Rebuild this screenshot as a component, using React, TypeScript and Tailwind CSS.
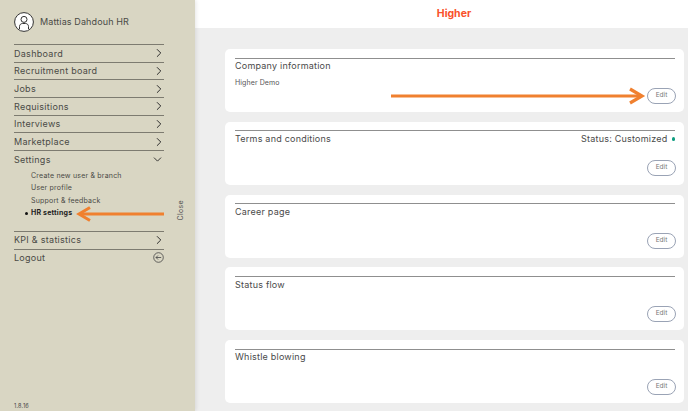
import { ChevronRight, ChevronDown } from "lucide-react";

const font = { fontFamily: '"Inter", "Liberation Sans", sans-serif' };

function Row({ label, open }: { label: string; open?: boolean }) {
  return (
    <div className="flex h-[17.7px] items-center justify-between border-t border-[#7d7b70] text-[9px] tracking-[0.28px] text-[#4a4a46]">
      <span>{label}</span>
      {open ? (
        <ChevronDown className="h-[13px] w-[13px] text-[#222]" strokeWidth={1.6} />
      ) : (
        <ChevronRight className="h-[14px] w-[14px] -mr-[2px] text-[#222]" strokeWidth={1.6} />
      )}
    </div>
  );
}

function Card({ title, status, sub, arrow }: { title: string; status?: boolean; sub?: string; arrow?: boolean }) {
  return (
    <div className="relative flex h-[63px] flex-col rounded-[5px] bg-white pl-[10px] pr-[9px] pt-[8.5px]">
      <div className="flex h-[16px] items-center justify-between border-t border-[#8f8f8f] text-[9px] tracking-[0.22px] text-[#4a4a4a]">
        <span>{title}</span>
        {status && (
          <span className="flex items-center gap-[3px]">
            Status: Customized
            <span className="ml-[1px] h-[3.5px] w-[3.5px] rounded-full bg-[#0f9d80]" />
          </span>
        )}
      </div>
      {sub && <div className="mt-[4px] text-[7px] tracking-[0.1px] text-[#555]">{sub}</div>}
      <button className="absolute bottom-[8.5px] right-[8px] flex h-[16px] w-[29px] items-center justify-center rounded-full border border-[#9aa3b5] text-[6.5px] text-[#777]">
        Edit
      </button>
      {arrow && (
        <svg className="absolute left-[165px] top-[37px]" width="256" height="20" viewBox="0 0 256 20" fill="none">
          <path d="M1 10H250" stroke="#f0802f" strokeWidth="3" />
          <path d="M240 3L252 10L240 17" stroke="#f0802f" strokeWidth="3.2" />
        </svg>
      )}
    </div>
  );
}

export default function App() {
  return (
    <div className="flex h-[411px] w-[688px] overflow-hidden bg-[#eeeeee]" style={font}>
      <aside className="relative flex w-[195px] shrink-0 flex-col bg-[#d9d6c3] px-[14px] shadow-[1px_0_4px_rgba(0,0,0,0.1)]">
        <div className="flex h-[44px] items-center gap-[6px]">
          <svg width="20" height="20" viewBox="0 0 20 20" fill="none" stroke="#333" strokeWidth="1" className="shrink-0">
            <circle cx="10" cy="10" r="9.4" fill="#fff" />
            <circle cx="10" cy="7.4" r="3" />
            <path d="M5.5 17V14.5C5.5 12.6 7 11.5 8.5 11.5H11.5C13 11.5 14.5 12.6 14.5 14.5V17" />
          </svg>
          <span className="text-[9px] tracking-[0.12px] text-[#4a4a46]">Mattias Dahdouh HR</span>
        </div>
        <div className="w-[150px]">
          <Row label="Dashboard" />
          <Row label="Recruitment board" />
          <Row label="Jobs" />
          <Row label="Requisitions" />
          <Row label="Interviews" />
          <Row label="Marketplace" />
          <Row label="Settings" open />
          <div className="flex h-[63px] flex-col pl-[17px] pt-[2px] text-[7px] tracking-[0.2px] text-[#4a4a46]">
            <div className="flex h-[12.4px] items-center">Create new user &amp; branch</div>
            <div className="flex h-[12.4px] items-center">User profile</div>
            <div className="flex h-[12.4px] items-center">Support &amp; feedback</div>
            <div className="relative flex h-[12.4px] items-center font-bold text-[#222]">
              <span className="absolute -left-[6px] h-[3px] w-[3px] rounded-full bg-[#111]" />
              HR settings
            </div>
          </div>
          <Row label="KPI & statistics" />
          <div className="flex h-[17.7px] items-center justify-between border-t border-[#7d7b70] text-[9px] tracking-[0.28px] text-[#4a4a46]">
            <span>Logout</span>
            <svg width="11" height="11" viewBox="0 0 11 11" fill="none" stroke="#444" strokeWidth="0.8">
              <circle cx="5.5" cy="5.5" r="4.8" />
              <path d="M8.2 5.5H3M5 3.5L3 5.5L5 7.5" />
            </svg>
          </div>
        </div>
        <svg className="absolute left-[76px] top-[206px]" width="90" height="16" viewBox="0 0 90 16" fill="none">
          <path d="M88 8H5" stroke="#f0802f" strokeWidth="3" />
          <path d="M14 1.5L3 8L14 14.5" stroke="#f0802f" strokeWidth="3" />
        </svg>
        <span className="absolute left-[171px] top-[205px] origin-center -rotate-90 text-[7px] tracking-[0.3px] text-[#555]">
          Close
        </span>
        <span className="mt-auto pb-[1px] text-[5.5px] leading-[8px] tracking-[0.2px] text-[#444]">1.8.16</span>
      </aside>
      <main className="flex min-w-0 flex-1 flex-col">
        <header className="flex h-[28px] shrink-0 items-center justify-center bg-white pl-[25px]">
          <span className="text-[10.5px] font-bold text-[#f9512b]">Higher</span>
        </header>
        <div className="flex flex-col gap-[9.75px] pl-[30px] pr-[4px] pt-[21px]">
          <Card title="Company information" sub="Higher Demo" arrow />
          <Card title="Terms and conditions" status />
          <Card title="Career page" />
          <Card title="Status flow" />
          <Card title="Whistle blowing" />
        </div>
      </main>
    </div>
  );
}
